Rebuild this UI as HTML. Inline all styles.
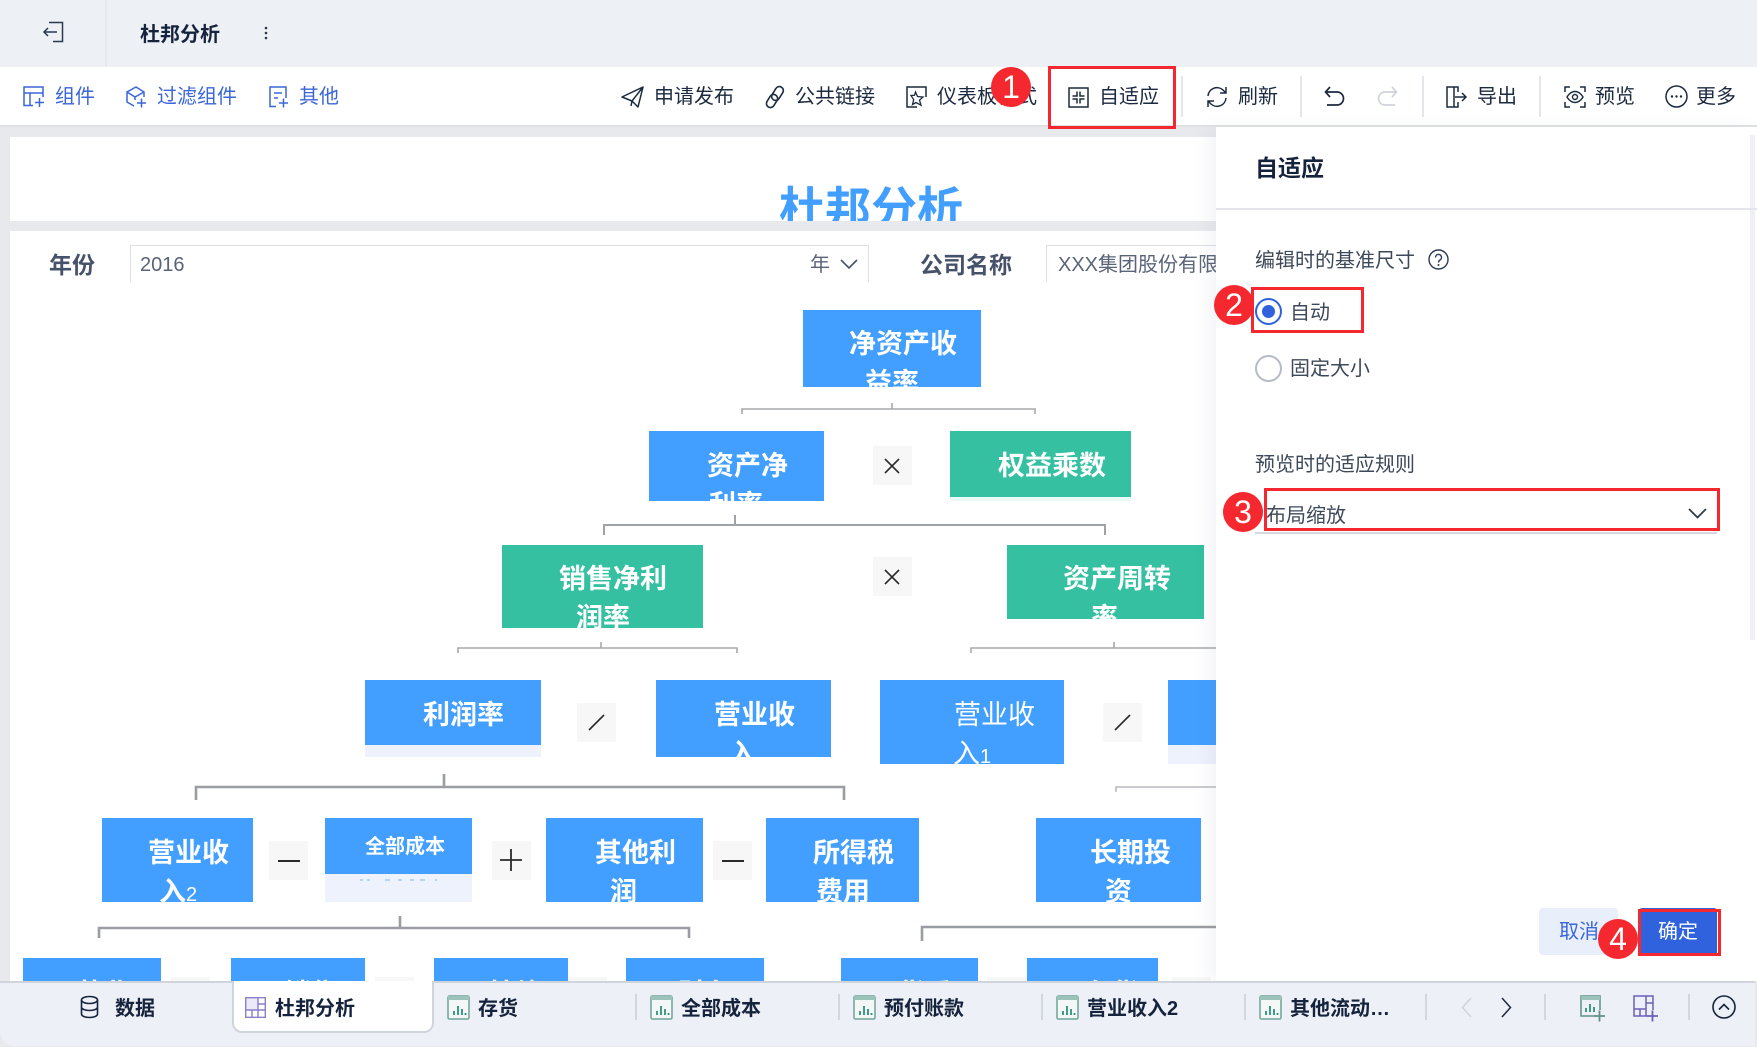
<!DOCTYPE html>
<html lang="zh"><head><meta charset="utf-8"><title>杜邦分析</title>
<style>
html,body{margin:0;padding:0;width:1757px;height:1047px;overflow:hidden;background:#e8e9ed}
body{position:relative;font-family:"Liberation Sans","Noto Sans CJK SC",sans-serif;color:#1c2a3f}
div,span,svg{position:absolute}
.t{white-space:nowrap;font-size:20px;line-height:30px}
.b{overflow:hidden;color:#fff;font-weight:700;font-size:27px;background:#429fff}
.g{background:#34c0a1}
.b span{white-space:nowrap;line-height:38px;margin:1px 0 0 -1px}
.b span span{margin:0}
.s{background:#edf2fd}
.op{background:#f7f7f7;width:39px;height:39px}
.sep{width:2px;background:#e3e6ec}
.tsep{width:2px;background:#d3d6dc;height:26px;top:994px}
.red{border:3px solid #f5282f;box-sizing:border-box;z-index:30}
.c{width:40px;height:40px;border-radius:50%;background:#f5282f;color:#fff;font-size:32px;line-height:40px;text-align:center;z-index:31}
.blue{color:#3b66d9}
.tab{font-weight:700;font-size:20px;line-height:30px;top:994px;white-space:nowrap;color:#16233c}
svg{overflow:visible;fill:none}
</style></head><body>

<!-- canvas -->
<div style="left:10px;top:137px;width:1300px;height:84px;background:#fff;overflow:hidden">
  <div style="left:769px;top:42px;font-size:46px;line-height:60px;font-weight:700;color:#429fff;white-space:nowrap">杜邦分析</div>
</div>
<div style="left:10px;top:231px;width:1300px;height:760px;background:#fff"></div>

<div class="t" style="left:49px;top:248px;font-size:23px;line-height:34px;font-weight:700;color:#46526a">年份</div>
<div style="left:130px;top:245px;width:739px;height:37px;border:solid #dcdfe7;border-width:1.5px 1.5px 0 1.5px;box-sizing:border-box"></div>
<div class="t" style="left:140px;top:250px;color:#5a6478">2016</div>
<div class="t" style="left:810px;top:250px;color:#5a6478">年</div>
<svg style="left:840px;top:258px" width="18" height="12"><path d="M1 2l8 8 8-8" stroke="#46526a" stroke-width="1.6"/></svg>
<div class="t" style="left:920px;top:248px;font-size:23px;line-height:34px;font-weight:700;color:#46526a">公司名称</div>
<div style="left:1046px;top:245px;width:200px;height:37px;border:solid #dcdfe7;border-width:1.5px 0 0 1.5px;box-sizing:border-box"></div>
<div class="t" style="left:1058px;top:250px;color:#5a6478">XXX集团股份有限</div>

<!-- connectors -->
<svg style="left:0;top:0" width="1757" height="1047">
<g stroke="#a6a8ac" stroke-width="1.6">
<path d="M742 414V409H1035V414M892 403V409"/>
<path d="M458 653V648H737V653M601 642V648"/>
<path d="M971 653V648H1216M1114 642V648"/>
</g>
<g stroke="#9fa2a6" stroke-width="2">
<path d="M604 535V525H1105V535M735 515V525"/>
</g>
<g stroke="#9a9da1" stroke-width="2.6">
<path d="M196 800V787H844V800M444 774V787"/>
<path d="M99 938V928H689V938M400 916V928"/>
<path d="M922 941V927H1216"/>
</g>
<path d="M1116 792V787H1216" stroke="#b8babd" stroke-width="1.6"/>
</svg>

<!-- row 1 -->
<div class="b" style="left:803px;top:310px;width:178px;height:77px"><span style="left:47px;top:14px">净资产收</span><span style="left:63px;top:53px">益率</span></div>
<!-- row 2 -->
<div class="b" style="left:649px;top:431px;width:175px;height:70px"><span style="left:59px;top:15px">资产净</span><span style="left:61px;top:54px">利率</span></div>
<div class="op" style="left:873px;top:446px"></div>
<svg style="left:883px;top:457px" width="18" height="18"><path d="M2 2l14 14M16 2L2 16" stroke="#2a2a2a" stroke-width="1.6"/></svg>
<div style="left:950px;top:497px;width:181px;height:4px;background:#e8fbf6"></div>
<div class="b g" style="left:950px;top:431px;width:181px;height:66px"><span style="left:49px;top:15px">权益乘数</span></div>
<!-- row 3 -->
<div class="b g" style="left:502px;top:545px;width:201px;height:83px"><span style="left:58px;top:14px">销售净利</span><span style="left:75px;top:53px">润率</span></div>
<div class="op" style="left:873px;top:557px"></div>
<svg style="left:883px;top:568px" width="18" height="18"><path d="M2 2l14 14M16 2L2 16" stroke="#2a2a2a" stroke-width="1.6"/></svg>
<div class="b g" style="left:1007px;top:545px;width:197px;height:74px"><span style="left:57px;top:14px">资产周转</span><span style="left:85px;top:53px">率</span></div>
<!-- row 4 -->
<div class="s" style="left:365px;top:745px;width:176px;height:12px"></div>
<div class="b" style="left:365px;top:680px;width:176px;height:65px"><span style="left:59px;top:15px">利润率</span></div>
<div class="op" style="left:577px;top:703px"></div>
<svg style="left:588px;top:713px" width="18" height="19"><path d="M1 17L16 2" stroke="#2a2a2a" stroke-width="1.6"/></svg>
<div class="b" style="left:656px;top:680px;width:175px;height:77px"><span style="left:59px;top:15px">营业收</span><span style="left:74px;top:54px">入</span></div>
<div class="b" style="left:880px;top:680px;width:184px;height:84px;font-weight:400"><span style="left:75px;top:15px">营业收</span><span style="left:74px;top:54px">入<span style="position:static;font-size:20px">1</span></span></div>
<div class="op" style="left:1103px;top:703px"></div>
<svg style="left:1114px;top:713px" width="18" height="19"><path d="M1 17L16 2" stroke="#2a2a2a" stroke-width="1.6"/></svg>
<div class="s" style="left:1168px;top:745px;width:60px;height:19px"></div>
<div class="b" style="left:1168px;top:680px;width:60px;height:65px"></div>
<!-- row 5 -->
<div class="b" style="left:102px;top:818px;width:151px;height:84px"><span style="left:47px;top:15px">营业收</span><span style="left:58px;top:54px">入<span style="position:static;font-size:20px;font-weight:400">2</span></span></div>
<div class="op" style="left:269px;top:841px"></div>
<svg style="left:278px;top:859px" width="22" height="4"><path d="M0 2h22" stroke="#2a2a2a" stroke-width="2"/></svg>
<div class="s" style="left:325px;top:874px;width:147px;height:28px"></div>
<svg style="left:360px;top:879px" width="80" height="3"><path d="M0 1h3M7 1h3M25 1h5M38 1h4M50 1h4M60 1h5M75 1h2" stroke="#8fc4fb" stroke-width="1.2"/></svg>
<div class="b" style="left:325px;top:818px;width:147px;height:56px;font-size:20px"><span style="left:41px;top:9px">全部成本</span></div>
<div class="op" style="left:492px;top:841px"></div>
<svg style="left:500px;top:849px" width="22" height="22"><path d="M0 11h22M11 0v22" stroke="#2a2a2a" stroke-width="1.8"/></svg>
<div class="b" style="left:546px;top:818px;width:157px;height:84px"><span style="left:50px;top:15px">其他利</span><span style="left:65px;top:54px">润</span></div>
<div class="op" style="left:713px;top:841px"></div>
<svg style="left:722px;top:859px" width="22" height="4"><path d="M0 2h22" stroke="#2a2a2a" stroke-width="2"/></svg>
<div class="b" style="left:766px;top:818px;width:153px;height:84px"><span style="left:48px;top:15px">所得税</span><span style="left:51px;top:54px">费用</span></div>
<div class="b" style="left:1036px;top:818px;width:165px;height:84px"><span style="left:55px;top:15px">长期投</span><span style="left:70px;top:54px">资</span></div>
<!-- row 6 -->
<div class="b" style="left:23px;top:958px;width:138px;height:42px"><span style="left:54px;top:16px">营业</span></div>
<div class="op" style="left:171px;top:977px"></div>
<div class="b" style="left:231px;top:958px;width:134px;height:42px"><span style="left:54px;top:16px">销售</span></div>
<div class="op" style="left:375px;top:977px"></div>
<div class="b" style="left:434px;top:958px;width:134px;height:42px"><span style="left:54px;top:16px">其他</span></div>
<div class="op" style="left:568px;top:977px"></div>
<div class="b" style="left:626px;top:958px;width:138px;height:42px"><span style="left:53px;top:16px">财务</span></div>
<div class="b" style="left:841px;top:958px;width:137px;height:42px"><span style="left:57px;top:16px">货币</span></div>
<div class="op" style="left:987px;top:977px"></div>
<div class="b" style="left:1027px;top:958px;width:131px;height:42px"><span style="left:58px;top:16px">存货</span></div>
<div class="op" style="left:1172px;top:977px"></div>

<!-- top bar -->
<div style="left:0;top:0;width:1757px;height:67px;background:#edf0f5"></div>
<div style="left:105px;top:0;width:2px;height:66px;background:#e6e8ee"></div>
<svg style="left:42px;top:21px" width="22" height="22"><path d="M7 1.500H20.500V20.500H11" stroke="#2b384e" stroke-width="1.5"/><path d="M15 11H2M6 7l-4 4 4 4" stroke="#2b384e" stroke-width="1.5"/></svg>
<div class="t" style="left:140px;top:20px;font-weight:700;color:#16233c">杜邦分析</div>
<svg style="left:264px;top:26px" width="4" height="14"><g fill="#2b384e"><circle cx="2" cy="2" r="1.300"/><circle cx="2" cy="7" r="1.300"/><circle cx="2" cy="12" r="1.300"/></g></svg>

<!-- toolbar -->
<div style="left:0;top:67px;width:1757px;height:58px;background:#fff"></div>
<div style="left:0;top:125px;width:1757px;height:2px;background:#dfe1e6"></div>

<svg style="left:23px;top:86px" width="22" height="22"><path d="M10 19.500H1V1H20V11M1 7H20M7 7V19" stroke="#3b66d9" stroke-width="1.500"/><path d="M12 16.500h9M16.500 12v9" stroke="#3b66d9" stroke-width="1.500"/></svg>
<div class="t blue" style="left:55px;top:82px">组件</div>
<svg style="left:125px;top:86px" width="22" height="22"><path d="M9 20L2 16V6l9-5 8 5v5M2 6l8 5 9-5M10 11v3" stroke="#3b66d9" stroke-width="1.500"/><path d="M12 17h9M16.500 12.500v9" stroke="#3b66d9" stroke-width="1.500"/></svg>
<div class="t blue" style="left:157px;top:82px">过滤组件</div>
<svg style="left:268px;top:86px" width="22" height="22"><path d="M8 20.500H2V1H18V12M6 7h8M6 12h4" stroke="#3b66d9" stroke-width="1.500"/><path d="M11 17h9M15.500 12.500v9" stroke="#3b66d9" stroke-width="1.500"/></svg>
<div class="t blue" style="left:299px;top:82px">其他</div>

<svg style="left:621px;top:85px" width="24" height="24"><path d="M1 12L22 2l-5 20-6-6zM22 2L11 16l-1 5" stroke="#1c2a3f" stroke-width="1.500" stroke-linejoin="round"/></svg>
<div class="t" style="left:654px;top:82px">申请发布</div>
<svg style="left:764px;top:85px" width="22" height="24"><g stroke="#1c2a3f" stroke-width="1.600"><rect x="9.500" y="1" width="8" height="15" rx="4" transform="rotate(32 13.500 8.500)"/><rect x="4" y="9" width="8" height="14" rx="4" transform="rotate(32 8 16)"/></g></svg>
<div class="t" style="left:795px;top:82px">公共链接</div>
<svg style="left:906px;top:86px" width="21" height="22"><path d="M20 11V1H1V21H11" stroke="#1c2a3f" stroke-width="1.500"/><path d="M9.500 6l2 4.500 5.500 .5-3.500 3.200 1.500 5-5-2.700-3.500 2 1.200-4.800L5 9.500l3.500-.2z" stroke="#1c2a3f" stroke-width="1.300"/></svg>
<div class="t" style="left:937px;top:82px">仪表板样式</div>
<svg style="left:1068px;top:87px" width="21" height="21"><path d="M1 1H20V20H1zM9 4.500V9H4.500M12 4.500V9h4.500M9 16.500V12H4.500M12 16.500V12h4.500" stroke="#1c2a3f" stroke-width="1.500"/></svg>
<div class="t" style="left:1099px;top:82px">自适应</div>
<div class="sep" style="left:1181px;top:76px;height:41px"></div>
<svg style="left:1205px;top:85px" width="24" height="24"><path d="M3 11a9 9 0 0 1 15-6l3 3M21 2v6h-6M21 13a9 9 0 0 1-15 6l-3-3M3 22v-6h6" stroke="#1c2a3f" stroke-width="1.500"/></svg>
<div class="t" style="left:1238px;top:82px">刷新</div>
<div class="sep" style="left:1300px;top:76px;height:41px"></div>
<svg style="left:1324px;top:86px" width="21" height="20"><path d="M6 1L1.500 6 6 11M2 6h11a6.500 6.500 0 0 1 0 13H3" stroke="#1c2a3f" stroke-width="1.700"/></svg>
<svg style="left:1377px;top:86px" width="21" height="20"><path d="M15 1l4.500 5L15 11M19 6H8a6.500 6.500 0 0 0 0 13h10" stroke="#cfd3da" stroke-width="1.700"/></svg>
<div class="sep" style="left:1422px;top:76px;height:41px"></div>
<svg style="left:1446px;top:86px" width="22" height="22"><path d="M12 6V1H1V21H12V16M8 1V21" stroke="#1c2a3f" stroke-width="1.500"/><path d="M9 11h11M16 7l4 4-4 4" stroke="#1c2a3f" stroke-width="1.500"/></svg>
<div class="t" style="left:1477px;top:82px">导出</div>
<div class="sep" style="left:1539px;top:76px;height:41px"></div>
<svg style="left:1564px;top:86px" width="22" height="22"><path d="M1 6V1H6M16 1h5V6M21 16v5H16M6 21H1V16" stroke="#1c2a3f" stroke-width="1.500"/><path d="M3 11s3-5.500 8-5.500S19 11 19 11s-3 5.500-8 5.500S3 11 3 11z" stroke="#1c2a3f" stroke-width="1.400"/><circle cx="11" cy="11" r="2.500" stroke="#1c2a3f" stroke-width="1.400"/></svg>
<div class="t" style="left:1595px;top:82px">预览</div>
<svg style="left:1665px;top:85px" width="23" height="23"><circle cx="11.500" cy="11.500" r="10.500" stroke="#1c2a3f" stroke-width="1.500"/><g fill="#1c2a3f"><circle cx="7" cy="11.500" r="1.200"/><circle cx="11.500" cy="11.500" r="1.200"/><circle cx="16" cy="11.500" r="1.200"/></g></svg>
<div class="t" style="left:1696px;top:82px">更多</div>

<div class="c" style="left:991px;top:67px">1</div>
<div class="red" style="left:1048px;top:66px;width:128px;height:63px"></div>

<!-- panel -->
<div style="left:1216px;top:127px;width:541px;height:854px;background:#fff;box-shadow:-8px 0 14px rgba(120,130,150,.08);z-index:10"></div>
<div style="left:1750px;top:135px;width:5px;height:505px;background:#eef0f3;z-index:11"></div>
<div style="left:1216px;top:208px;width:541px;height:2px;background:#e3e5ea;z-index:11"></div>
<div style="z-index:12;left:0;top:0;width:1757px;height:1047px">
<div class="t" style="left:1255px;top:151px;font-size:23px;line-height:34px;font-weight:700;color:#16233c">自适应</div>
<div class="t" style="left:1255px;top:246px;color:#3d4859">编辑时的基准尺寸</div>
<svg style="left:1428px;top:249px" width="21" height="21"><circle cx="10.500" cy="10.500" r="9.500" stroke="#2b3a55" stroke-width="1.400"/><path d="M7.500 8.500a3 3 0 1 1 4.500 2.500c-1 .6-1.500 1.200-1.500 2.500" stroke="#2b3a55" stroke-width="1.400"/><circle cx="10.500" cy="16" r="1" fill="#2b3a55"/></svg>
<div style="left:1255px;top:298px;width:27px;height:27px;border:2px solid #2f62dc;border-radius:50%;box-sizing:border-box"></div>
<div style="left:1262px;top:305px;width:13px;height:13px;background:#2f62dc;border-radius:50%"></div>
<div class="t" style="left:1290px;top:298px;color:#3d4859">自动</div>
<div style="left:1255px;top:355px;width:27px;height:27px;border:2px solid #b5bac6;border-radius:50%;box-sizing:border-box"></div>
<div class="t" style="left:1290px;top:354px;color:#3d4859">固定大小</div>
<div class="t" style="left:1255px;top:450px;color:#3d4859">预览时的适应规则</div>
<div class="t" style="left:1266px;top:501px;color:#3d4859">布局缩放</div>
<svg style="left:1688px;top:507px" width="19" height="13"><path d="M1 2l8.500 8.500L18 2" stroke="#2b384e" stroke-width="1.700"/></svg>
<div style="left:1255px;top:532px;width:462px;height:2px;background:#d5d8e0"></div>
<div style="left:1539px;top:908px;width:79px;height:47px;background:#e8effb;border-radius:4px"></div>
<div class="t blue" style="left:1559px;top:917px">取消</div>
<div style="left:1639px;top:908px;width:78px;height:47px;background:#2f62dc;border-radius:3px"></div>
<div class="t" style="left:1658px;top:917px;color:#fff">确定</div>
</div>
<div class="c" style="left:1214px;top:285px">2</div>
<div class="red" style="left:1251px;top:287px;width:113px;height:46px"></div>
<div class="c" style="left:1223px;top:492px">3</div>
<div class="red" style="left:1264px;top:488px;width:456px;height:43px"></div>
<div class="c" style="left:1598px;top:919px">4</div>
<div class="red" style="left:1638px;top:909px;width:83px;height:47px"></div>

<!-- bottom tabs -->
<div style="left:0;top:981px;width:1755px;height:65px;background:#edf0f6;border-top:2px solid #d0d4dd;box-sizing:border-box;border-bottom-left-radius:14px;z-index:40"></div>
<div style="z-index:41;left:0;top:0;width:1757px;height:1047px">
<svg style="left:80px;top:995px" width="19" height="24"><g stroke="#16233c" stroke-width="1.600"><ellipse cx="9.500" cy="5" rx="8" ry="3.500"/><path d="M1.500 5v14c0 2 3.500 3.500 8 3.500s8-1.500 8-3.500V5M1.500 12c0 2 3.500 3.500 8 3.500s8-1.500 8-3.500"/></g></svg>
<div class="tab" style="left:115px">数据</div>

<div style="left:232px;top:981px;width:202px;height:52px;background:#fff;border:2px solid #d0d4dd;border-top:0;border-radius:0 0 10px 10px;box-sizing:border-box"></div>
<svg style="left:245px;top:997px" width="21" height="21"><path d="M1 1H13V13H1z" fill="#ece9f8"/><path d="M.7.700H20.300V20.300H.7zM13 .7V20.300M13 7H20.300M.7 13H20.300M7 13V20.300" stroke="#8a7fc9" stroke-width="1.400"/></svg>
<div class="tab" style="left:275px">杜邦分析</div>

<svg style="left:447px;top:995px" width="23" height="25"><rect x="1" y="1" width="21" height="23" rx="1.500" stroke="#6ea398" stroke-width="1.500" fill="#f3f8f7"/><path d="M1 1h21v4H1z" fill="#9cc3ba"/><path d="M7 20v-4M11 20v-9M15 20v-6M18.500 20v-2" stroke="#2f8f7c" stroke-width="1.800"/></svg>
<div class="tab" style="left:478px">存货</div>
<div class="tsep" style="left:635px"></div>
<svg style="left:650px;top:995px" width="23" height="25"><rect x="1" y="1" width="21" height="23" rx="1.500" stroke="#6ea398" stroke-width="1.500" fill="#f3f8f7"/><path d="M1 1h21v4H1z" fill="#9cc3ba"/><path d="M7 20v-4M11 20v-9M15 20v-6M18.500 20v-2" stroke="#2f8f7c" stroke-width="1.800"/></svg>
<div class="tab" style="left:681px">全部成本</div>
<div class="tsep" style="left:838px"></div>
<svg style="left:853px;top:995px" width="23" height="25"><rect x="1" y="1" width="21" height="23" rx="1.500" stroke="#6ea398" stroke-width="1.500" fill="#f3f8f7"/><path d="M1 1h21v4H1z" fill="#9cc3ba"/><path d="M7 20v-4M11 20v-9M15 20v-6M18.500 20v-2" stroke="#2f8f7c" stroke-width="1.800"/></svg>
<div class="tab" style="left:884px">预付账款</div>
<div class="tsep" style="left:1041px"></div>
<svg style="left:1056px;top:995px" width="23" height="25"><rect x="1" y="1" width="21" height="23" rx="1.500" stroke="#6ea398" stroke-width="1.500" fill="#f3f8f7"/><path d="M1 1h21v4H1z" fill="#9cc3ba"/><path d="M7 20v-4M11 20v-9M15 20v-6M18.500 20v-2" stroke="#2f8f7c" stroke-width="1.800"/></svg>
<div class="tab" style="left:1087px">营业收入2</div>
<div class="tsep" style="left:1244px"></div>
<svg style="left:1259px;top:995px" width="23" height="25"><rect x="1" y="1" width="21" height="23" rx="1.500" stroke="#6ea398" stroke-width="1.500" fill="#f3f8f7"/><path d="M1 1h21v4H1z" fill="#9cc3ba"/><path d="M7 20v-4M11 20v-9M15 20v-6M18.500 20v-2" stroke="#2f8f7c" stroke-width="1.800"/></svg>
<div class="tab" style="left:1290px">其他流动…</div>
<div class="tsep" style="left:1425px"></div>
<svg style="left:1461px;top:997px" width="11" height="21"><path d="M10 1L1.500 10.500 10 20" stroke="#cfd3da" stroke-width="1.500"/></svg>
<svg style="left:1501px;top:997px" width="11" height="21"><path d="M1 1l8.500 9.500L1 20" stroke="#1c2a3f" stroke-width="1.500"/></svg>
<div class="tsep" style="left:1544px"></div>
<svg style="left:1580px;top:995px" width="26" height="27"><path d="M14 21H1V1H20V15" stroke="#5f8f86" stroke-width="1.500"/><path d="M1 1h19v4H1z" fill="#9cc3ba"/><path d="M6 17v-4M10 17v-8M14 17v-5" stroke="#2f8f7c" stroke-width="1.800"/><path d="M14 21h11M19.500 15.500v11" stroke="#5f8f86" stroke-width="1.800"/></svg>
<svg style="left:1633px;top:995px" width="26" height="27"><path d="M14 21H1V1H20V15M13 1V21M13 8H20M1 14H13M7 14V21" stroke="#6c5fb8" stroke-width="1.500"/><path d="M14 21h11M19.500 15.500v11" stroke="#6c5fb8" stroke-width="1.800"/></svg>
<div class="tsep" style="left:1688px"></div>
<svg style="left:1712px;top:995px" width="24" height="24"><circle cx="12" cy="12" r="11" stroke="#16233c" stroke-width="1.600"/><path d="M7 14.500l5-5 5 5" stroke="#16233c" stroke-width="1.600"/></svg>
</div>
</body></html>
